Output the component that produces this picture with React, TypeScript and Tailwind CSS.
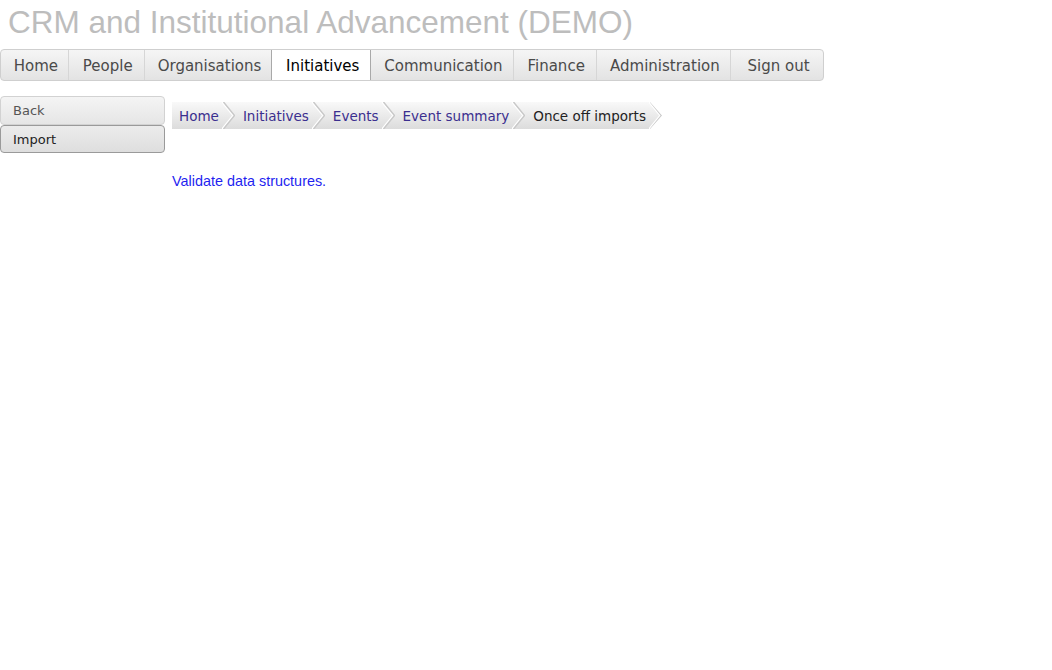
import React from "react";

const NAV = [
  { label: "Home", w: "w-[67px]" },
  { label: "People", w: "w-[76px]" },
  { label: "Organisations", w: "w-[128px]" },
  { label: "Initiatives", w: "w-[100px]", active: true },
  { label: "Communication", w: "w-[142px]" },
  { label: "Finance", w: "w-[83px]" },
  { label: "Administration", w: "w-[135px]" },
  { label: "Sign out", w: "w-[93px]" },
];

const CRUMBS = ["Home", "Initiatives", "Events", "Event summary", "Once off imports"];

function Chevron() {
  return (
    <svg width="13" height="27" viewBox="0 0 13 27" className="shrink-0">
      <polyline points="0,0 11,13.5 0,27" fill="none" stroke="#ffffff" strokeWidth="1.5" />
      <polyline points="1.5,0 12.5,13.5 1.5,27" fill="none" stroke="#c9c9c9" strokeWidth="1.5" />
    </svg>
  );
}

export default function App() {
  return (
    <div className="min-h-screen bg-white font-['DejaVu_Sans',sans-serif]">
      {/* Site title */}
      <div className="pt-[4px] pl-[8px] h-[49px]">
        <div className="font-['Liberation_Sans',Arial,sans-serif] text-[31.5px] leading-[36px] text-[#bdbdbd]">
          CRM and Institutional Advancement (DEMO)
        </div>
      </div>

      {/* Main nav */}
      <div className="flex w-[824px] h-[32px] border border-[#cfcfcf] rounded-[4px] bg-gradient-to-b from-[#f5f5f5] to-[#e3e3e3] overflow-hidden">
        {NAV.map((item, i) => (
          <div
            key={item.label}
            className={
              item.w +
              " h-full flex items-center justify-center pt-[2px] pl-[3px] text-[15px] " +
              (item.active
                ? "bg-white border-x border-[#a9a9a9] text-black"
                : "text-[#4a4a4a] " + (i > 0 && !NAV[i - 1].active ? "border-l border-[#d6d6d6]" : ""))
            }
          >
            {item.label}
          </div>
        ))}
      </div>

      <div className="flex gap-[7px] mt-[15px]">
        {/* Side actions */}
        <div className="w-[165px] shrink-0 flex flex-col">
          <div className="h-[29px] flex items-center pl-[12px] pt-[1px] text-[13px] text-[#555] border border-[#d2d2d2] rounded-[4px] bg-gradient-to-b from-[#f4f4f4] to-[#e6e6e6]">
            Back
          </div>
          <div className="h-[28px] flex items-center pl-[12px] pt-[1px] text-[13px] text-[#222] border border-[#9a9a9a] rounded-[4px] bg-gradient-to-b from-[#ececec] to-[#dedede]">
            Import
          </div>
        </div>

        {/* Content */}
        <div className="pt-[6px]">
          <div className="inline-flex h-[27px] items-center bg-gradient-to-b from-[#f9f9f9] to-[#dcdcdc] [clip-path:polygon(0_0,calc(100%-12px)_0,100%_50%,calc(100%-12px)_100%,0_100%)]">
            {CRUMBS.map((c, i) => (
              <div key={c} className="flex items-center h-full">
                <span
                  className={
                    "text-[13.5px] pt-[2px] whitespace-nowrap " +
                    (i === 0 ? "pl-[7px] " : "pl-[8px] ") +
                    "pr-[3px] " +
                    (i === CRUMBS.length - 1 ? "text-[#222]" : "text-[#3b2f8f]")
                  }
                >
                  {c}
                </span>
                <Chevron />
              </div>
            ))}
          </div>

          <div className="mt-[42px] font-['Liberation_Sans',Arial,sans-serif] text-[14.4px] text-[#1f1ff0]">
            Validate data structures.
          </div>
        </div>
      </div>
    </div>
  );
}
